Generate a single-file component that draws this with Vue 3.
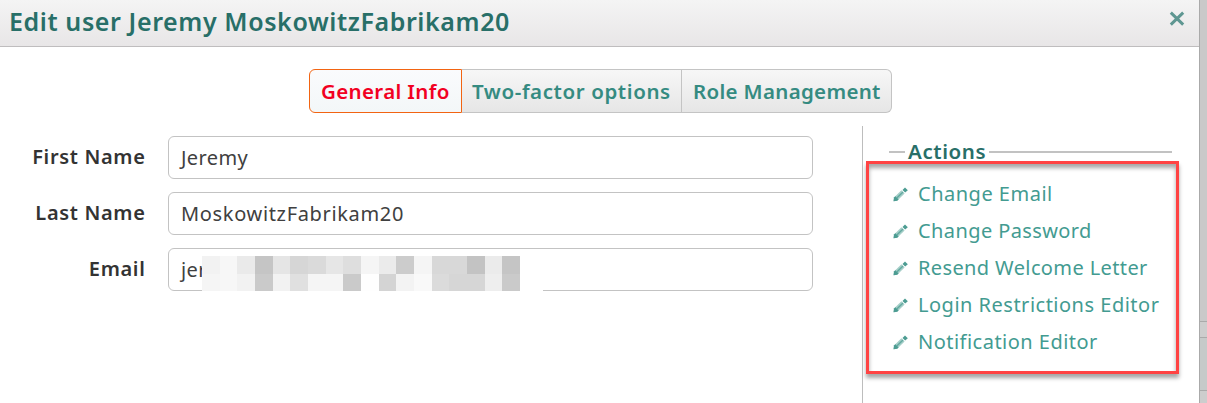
<script setup>
const tabs = [
  { label: 'General Info', cls: 'general' },
  { label: 'Two-factor options', cls: 'factor' },
  { label: 'Role Management', cls: 'role' },
]
const fields = [
  { label: 'First Name', value: 'Jeremy', cls: 'first' },
  { label: 'Last Name', value: 'MoskowitzFabrikam20', cls: 'last' },
  { label: 'Email', value: 'jer', cls: 'email', masked: true },
]
const actions = [
  { label: 'Change Email', cls: 'a1' },
  { label: 'Change Password', cls: 'a2' },
  { label: 'Resend Welcome Letter', cls: 'a3' },
  { label: 'Login Restrictions Editor', cls: 'a4' },
  { label: 'Notification Editor', cls: 'a5' },
]
const mosaic = [
  ['#f2f2f2', '#f7f7f7', '#eaeaea', '#c5c5c5', '#e5e5e5', '#d6d6d6', '#dadada', '#e6e6e6', '#dedede', '#f5f5f5', '#ebebeb', '#cccccc', '#f5f5f5', '#d8d8d8', '#d8d8d8', '#c3c3c3', '#ebebeb', '#c5c5c5'],
  ['#f5f5f5', '#f7f7f7', '#f2f2f2', '#cacaca', '#f2f2f2', '#e0e0e0', '#f5f5f5', '#f5f5f5', '#cacaca', '#fefefe', '#d4d4d4', '#f3f3f3', '#f9f9f9', '#dbdbdb', '#d6d6d6', '#d6d6d6', '#eeeeee', '#cacaca'],
]
</script>

<template>
  <div class="screen">
    <div class="dialog">
      <header class="titlebar">
        <h1>Edit user Jeremy MoskowitzFabrikam20</h1>
        <svg class="close" width="16" height="16" viewBox="0 0 16 16"><path d="M1.8 1.6L14.2 13.6M14.2 1.6L1.8 13.6" stroke="#5f9792" stroke-width="3" fill="none" /></svg>
      </header>
      <nav class="tabs">
        <div v-for="(t, i) in tabs" :key="t.label" class="tab" :class="[t.cls, { active: i === 0 }]"><span>{{ t.label }}</span></div>
      </nav>
      <div class="body">
        <form class="form">
          <div v-for="f in fields" :key="f.label" class="row" :class="f.cls">
            <label><span>{{ f.label }}</span></label>
            <div class="input">
              <span>{{ f.value }}</span>
              <div v-if="f.masked" class="mask">
                <template v-for="(r, y) in mosaic" :key="y">
                  <i v-for="(c, x) in r" :key="x" :style="{ background: c }"></i>
                </template>
              </div>
            </div>
          </div>
        </form>
        <aside class="side">
          <div class="legend"><span>Actions</span></div>
          <ul class="actions">
            <li v-for="a in actions" :key="a.label" :class="a.cls">
              <svg width="15" height="15" viewBox="0 0 15 15">
                <path d="M0.5 14.3L1 10.5L8.4 3.3L11.6 6.5L4.2 13.8Z" fill="#a5cec8" />
                <path d="M0.5 14.3L1 10.5L2.4 9.2L5.6 12.4L4.2 13.8Z" fill="#4c9c92" />
                <path d="M3.8 11L10 5" stroke="#62a9a0" stroke-width="1.4" />
                <path d="M9.5 2.9L12 0.5L14.8 3.2L12.2 5.6Z" fill="#4c9c92" />
              </svg>
              <span>{{ a.label }}</span>
            </li>
          </ul>
          <div class="highlight"></div>
        </aside>
      </div>
    </div>
    <div class="backdrop"><div class="b1"></div><div class="b2"></div><div class="b3"></div><div class="b4"></div></div>
  </div>
</template>

<style>
body { margin: 0; overflow: hidden; }
</style>
<style scoped>
* { box-sizing: border-box; }
.screen { display: flex; width: 1207px; height: 403px; overflow: hidden; background: #fff; font-family: "Noto Sans", "Open Sans", sans-serif; color: #333; white-space: nowrap; }
.dialog { width: 1199px; height: 403px; display: flex; flex-direction: column; }
.titlebar { height: 47px; flex: none; display: flex; justify-content: space-between; padding: 0 14px 0 9px; border-bottom: 1px solid #bfbdbe; background: linear-gradient(#f4f4f4, #e8e6e7); }
h1 { margin: 4px 0 0; font-size: 25px; line-height: 34px; font-weight: 600; color: #286f68; letter-spacing: .6px; }
.close { margin-top: 11px; }
.tabs { display: flex; height: 44px; width: 583px; margin: 22px 0 0 309px; flex: none; }
.tab { height: 44px; border: 1px solid #c4c4c4; border-left: 0; background: linear-gradient(#f7f7f7, #e6e6e6); color: #358b81; font-size: 20.5px; font-weight: 600; line-height: 43px; }
.general { width: 153px; padding-left: 11px; letter-spacing: .35px; }
.factor { width: 220px; padding-left: 10px; letter-spacing: .6px; }
.role { width: 210px; padding-left: 11px; border-radius: 0 6px 6px 0; letter-spacing: .32px; }
.tab.active { border: 1px solid #f26412; border-radius: 6px 0 0 6px; background: linear-gradient(#fafbfd, #f3f7f8); color: #f20022; }
.body { display: flex; margin-top: 13px; height: 277px; }
.form { width: 862px; padding-top: 10px; display: flex; flex-direction: column; gap: 13px; }
.row { display: flex; height: 43px; }
label { width: 145.5px; margin-right: 22.5px; text-align: right; font-size: 20px; font-weight: 600; line-height: 41px; letter-spacing: .66px; }
.input { position: relative; width: 645px; height: 43px; border: 1px solid #c3c3c3; border-radius: 6px; padding-left: 12px; font-size: 20px; line-height: 42px; letter-spacing: .4px; color: #404040; }
.last .input { letter-spacing: .66px; }
.mask { position: absolute; left: 33px; top: 7px; width: 341px; height: 35px; background: #fff; display: grid; grid-template-columns: repeat(18, 17.67px); grid-template-rows: 18px 17px; }
.side { position: relative; width: 337px; border-left: 1px solid #bdbdbd; padding: 14px 27px 0 26px; }
.legend { display: flex; align-items: center; height: 24px; font-size: 20.5px; font-weight: 600; color: #286f68; letter-spacing: .6px; }
.legend span { line-height: 24px; margin-top: -2px; }
.legend::before, .legend::after { content: ""; height: 2px; background: #c2c2c2; }
.legend::before { width: 16px; margin-right: 3px; }
.legend::after { flex: 1; margin-left: 3px; }
.actions { list-style: none; margin: 11px 0 0; padding: 0 0 0 4px; }
.actions li { display: flex; align-items: center; height: 37px; font-size: 20px; color: #439b91; letter-spacing: .5px; }
.actions .a2 { letter-spacing: .4px; }
.actions .a3 { letter-spacing: .38px; }
.actions .a5 { letter-spacing: .48px; }
.actions svg { margin: 2px 10px 0 0; flex: none; }
.highlight { position: absolute; left: 3px; top: 35px; width: 313px; height: 213px; border: 3px solid #ff4343; box-shadow: 0 4px 4px rgba(0,0,0,.35), inset 0 4px 4px rgba(0,0,0,.35); }
.backdrop { width: 8px; border-left: 1px solid #aaa; background: #c9c9c9; display: flex; flex-direction: column; }
.b1 { height: 322px; border-bottom: 1px solid #aaa; }
.b2 { height: 16px; border-bottom: 1px solid #aaa; background: #cdcdcd; }
.b3 { height: 53px; border-bottom: 1px solid #aaa; background: #c6cac9; }
.b4 { flex: 1; background: #cdcdcd; }
</style>
